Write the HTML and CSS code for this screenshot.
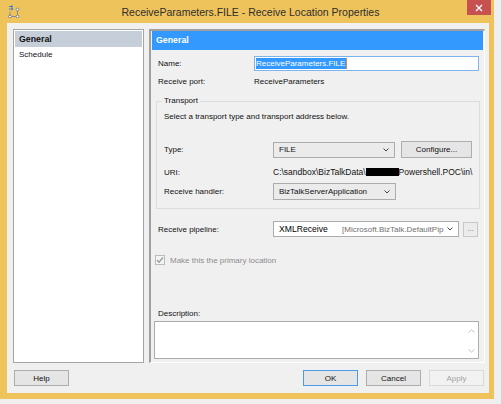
FILE: index.html
```html
<!DOCTYPE html>
<html lang="en">
<head>
	<meta charset="UTF-8">
	<title>Receive Location Properties</title>
	<link rel="stylesheet" href="styles.css">
</head>
<body>
	<div class="window">
		<div class="titlebar">
			<svg class="appicon" width="12" height="13" viewBox="0 0 12 13">
				<path d="M1 1.5h4M3.5 0.5l1.5 1-1.5 1M1 4h4M3.5 3l1.5 1-1.5 1" stroke="#3a7fd5" stroke-width="1" fill="none"/>
				<path d="M2 6.5V11.5H9.5V5" stroke="#8c8c8c" stroke-width="1" fill="none"/>
				<circle cx="2" cy="11.5" r="1.4" fill="#fff" stroke="#7d7d7d"/>
				<circle cx="9.5" cy="11.5" r="1.4" fill="#fff" stroke="#7d7d7d"/>
				<circle cx="9.5" cy="4.5" r="1.4" fill="#fff" stroke="#7d7d7d"/>
			</svg>
			<div class="title">ReceiveParameters.FILE - Receive Location Properties</div>
			<div class="close">
				<svg width="8" height="8" viewBox="0 0 8 8"><path d="M1 1L7 7M7 1L1 7" stroke="#fff" stroke-width="1.4"/></svg>
			</div>
		</div>

		<div class="client">
			<div class="main">
				<ul class="nav">
					<li class="selected">General</li>
					<li>Schedule</li>
				</ul>

				<div class="page">
					<div class="page-head">General</div>
					<div class="page-body">
						<div class="row row-name">
							<span class="label label-wide">Name:</span>
							<div class="textbox"><span class="sel">ReceiveParameters.FILE</span><span class="caret"></span></div>
						</div>
						<div class="row row-port">
							<span class="label label-wide">Receive port:</span>
							<span>ReceiveParameters</span>
						</div>

						<fieldset class="group">
							<legend>Transport</legend>
							<p class="hint">Select a transport type and transport address below.</p>
							<div class="row row-type">
								<span class="label">Type:</span>
								<div class="combo combo-type">FILE<svg class="chev" width="6" height="4" viewBox="0 0 6 4"><path d="M0.5 0.5L3 3 5.5 0.5" stroke="#444" fill="none"/></svg></div>
								<div class="btn btn-config">Configure...</div>
							</div>
							<div class="row row-uri">
								<span class="label">URI:</span>
								<span class="uri">C:\sandbox\BizTalkData\<span class="redact"></span>Powershell.POC\in\</span>
							</div>
							<div class="row row-handler">
								<span class="label">Receive handler:</span>
								<div class="combo combo-handler">BizTalkServerApplication<svg class="chev" width="6" height="4" viewBox="0 0 6 4"><path d="M0.5 0.5L3 3 5.5 0.5" stroke="#444" fill="none"/></svg></div>
							</div>
						</fieldset>

						<div class="row row-pipeline">
							<span class="label label-pipe">Receive pipeline:</span>
							<div class="combo combo-pipe">
								<span class="pipe-name">XMLReceive</span>
								<span class="pipe-asm">[Microsoft.BizTalk.DefaultPip</span>
								<svg class="chev" width="6" height="4" viewBox="0 0 6 4"><path d="M0.5 0.5L3 3 5.5 0.5" stroke="#444" fill="none"/></svg>
							</div>
							<div class="btn btn-dots">...</div>
						</div>

						<div class="row row-check">
							<span class="checkbox">
								<svg width="8" height="8" viewBox="0 0 8 8"><path d="M1 4L3 6.2 7 1.5" stroke="#9a9a9a" stroke-width="1.3" fill="none"/></svg>
							</span>
							<span class="check-text">Make this the primary location</span>
						</div>

						<div class="row row-desc">Description:</div>
						<div class="textarea">
							<div class="scroll">
								<svg width="7" height="4" viewBox="0 0 7 4"><path d="M0.5 3.5L3.5 0.8 6.5 3.5" stroke="#c4c4c4" fill="none"/></svg>
								<svg width="7" height="4" viewBox="0 0 7 4"><path d="M0.5 0.5L3.5 3.2 6.5 0.5" stroke="#c4c4c4" fill="none"/></svg>
							</div>
						</div>
					</div>
				</div>
			</div>

			<div class="footer">
				<div class="btn btn-help">Help</div>
				<div class="actions">
					<div class="btn btn-default">OK</div>
					<div class="btn">Cancel</div>
					<div class="btn btn-disabled">Apply</div>
				</div>
			</div>
		</div>
	</div>
</body>
</html>
```

FILE: styles.css
```css
body{
	margin: 0; background: #efefef; font-family: "Liberation Sans", Arial, sans-serif; font-size: 8px; color: #111;
}
.window{
	width: 494px; height: 399px; background: #efc35c; box-shadow: 0 5px 0 #4b4b4b; box-sizing: border-box; padding-bottom: 6px;
}
.titlebar{
	display: flex; height: 23px;
}
.appicon{
	margin: 5px 0 0 8px;
}
.title{
	flex: 1; text-align: center; font-size: 10.5px; line-height: 14px; padding: 5px 0 0 14px; color: #2e2e2e;
}
.close{
	width: 24px; height: 15px; margin-right: 3px; background: #c75050; display: flex; align-items: center; justify-content: center;
}
.client{
	margin: 0 5px 0 7px; height: 370px; background: #f0f0f0; padding: 6px 4px 0 6px; box-sizing: border-box;
}
.main{
	display: flex; gap: 5px; height: 334px;
}

.nav{
	width: 134px; margin: 0; padding: 1px; list-style: none; background: #fff; border: 1px solid #a5a5a5; box-sizing: border-box;
}
.nav li{
	height: 16px; line-height: 16px; padding-left: 4px;
}
.nav .selected{
	background: #c6cfd9; font-weight: bold; font-size: 8.8px;
}

.page{
	flex: 1; border-left: 2px solid #a0a0a0; border-top: 2px solid #a0a0a0; border-right: 1px solid #fff; border-bottom: 1px solid #fff; box-sizing: border-box; padding: 0 1px;
}
.page-head{
	height: 19px; line-height: 19px; background: #3399ff; color: #fff; font-weight: bold; font-size: 8.8px; padding-left: 4px;
}
.page-body{
	padding: 0 3px 0 6px;
}
.row{
	display: flex; align-items: center;
}
.label{
	width: 109px; flex: none;
}
.label-wide{
	width: 96px;
}
.label-pipe{
	width: 115px;
}

.row-name{
	margin-top: 6px; height: 15px;
}
.textbox{
	width: 225px; height: 15px; box-sizing: border-box; border: 1px solid #7eb4ea; background: #fff; display: flex; align-items: center; padding-left: 1px;
}
.sel{
	background: #3399ff; color: #fff; line-height: 11px; padding-right: 1px;
}
.caret{
	width: 1px; height: 11px; background: #e08a3a;
}
.row-port{
	margin-top: 3px; height: 14px;
}

.group{
	margin: 8px 0 0 -2px; width: 324px; box-sizing: border-box; border: 1px solid #dcdcdc; padding: 0 4px 8px 7px;
}
.group legend{
	padding: 0 2px; margin-left: -2px; line-height: 10px;
}
.hint{
	margin: 6px 0 0; line-height: 10px;
}
.row-type{
	margin-top: 19px; height: 17px;
}
.combo{
	height: 16px; box-sizing: border-box; border: 1px solid #acacac; background: #ebebeb; display: flex; align-items: center; padding: 0 5px 0 5px;
}
.chev{
	margin-left: auto;
}
.combo-type{
	width: 122px;
}
.btn{
	height: 16px; box-sizing: border-box; border: 1px solid #adadad; background: #e5e5e5; display: flex; align-items: center; justify-content: center;
}
.btn-config{
	width: 71px; height: 17px; margin-left: 6px;
}
.row-uri{
	margin-top: 7px; height: 14px;
}
.uri{
	white-space: nowrap; font-size: 8.5px;
}
.redact{
	display: inline-block; width: 33px; height: 8px; background: #000; vertical-align: -1px;
}
.row-handler{
	margin-top: 4px; height: 17px;
}
.combo-handler{
	width: 123px; height: 17px;
}

.row-pipeline{
	margin-top: 12px; height: 16px;
}
.combo-pipe{
	width: 186px; background: #fff;
}
.pipe-name{
	width: 63px; color: #000; font-size: 8.6px;
}
.pipe-asm{
	color: #707070; white-space: nowrap;
}
.btn-dots{
	width: 15px; height: 15px; margin-left: 4px; background: #ececec; border-color: #c8c8c8; color: #777; align-items: flex-end; padding-bottom: 3px;
}

.row-check{
	margin: 18px 0 0 -3px; height: 10px;
}
.checkbox{
	width: 10px; height: 10px; box-sizing: border-box; border: 1px solid #bcbcbc; background: #f4f4f4; display: flex; align-items: center; justify-content: center;
}
.check-text{
	margin-left: 5px; color: #8d8d8d;
}
.row-desc{
	margin-top: 43px; height: 10px;
}
.textarea{
	margin: 3px 0 0 -4px; width: 325px; height: 38px; box-sizing: border-box; border: 1px solid #acacac; background: #fff; display: flex; justify-content: flex-end;
}
.scroll{
	width: 14px; display: flex; flex-direction: column; justify-content: space-between; align-items: center; padding: 7px 0 5px;
}

.footer{
	display: flex; justify-content: space-between; margin-top: 7px; padding-left: 1px;
}
.btn-help{
	width: 55px;
}
.actions{
	display: flex; gap: 8px; margin-right: 1px;
}
.actions .btn{
	width: 55px;
}
.btn-default{
	border-color: #4c9be8;
}
.btn-disabled{
	background: #f2f2f2; border-color: #d9d9d9; color: #a3a3a3;
}
```
